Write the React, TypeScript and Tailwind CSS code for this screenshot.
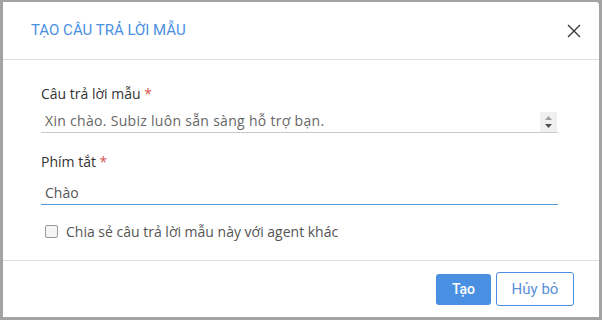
import React from "react";

export default function App() {
  return (
    <div className="w-[602px] h-[320px] bg-[#a3a3a3] pt-[2px] pl-[3px] pr-[3px] pb-[3px]">
      <div className="w-full h-full bg-white rounded-tr-[3px] flex flex-col" style={{ fontFamily: "'Open Sans', 'Noto Sans', sans-serif" }}>
        <div className="h-[58px] flex items-center justify-between pl-[28px] pr-[18px] border-b border-[#dedede]">
          <div className="text-[15px] text-[#4a90e2] tracking-[0px]" style={{ fontFamily: "Roboto, sans-serif" }}>TẠO CÂU TRẢ LỜI MẪU</div>
          <svg width="14" height="14" viewBox="0 0 14 14" className="mt-[1px]">
            <path d="M1 1 L13 13 M13 1 L1 13" stroke="#333" strokeWidth="1.3" />
          </svg>
        </div>
        <div className="flex-1 pl-[38px] pr-[41px] pt-[24px] border-b border-[#dedede]">
          <div className="text-[14px] text-[#333] leading-[20px]">Câu trả lời mẫu <span className="text-[#d9534f]">*</span></div>
          <div className="mt-[4px] h-[25px] border-b border-[#c8c8c8] flex items-center justify-between">
            <div className="pl-[4px] text-[14px] text-[#666] tracking-[0.3px]">Xin chào. Subiz luôn sẵn sàng hỗ trợ bạn.</div>
            <div className="w-[17px] h-[20px] bg-[#f0f0f0] flex flex-col items-center justify-center gap-[4px] mr-[1px] mb-[-4px]">
              <svg width="7" height="4" viewBox="0 0 7 4"><path d="M0 4 L3.5 0 L7 4 Z" fill="#a0a0a0" /></svg>
              <svg width="7" height="4" viewBox="0 0 7 4"><path d="M0 0 L3.5 4 L7 0 Z" fill="#505050" /></svg>
            </div>
          </div>
          <div className="mt-[19px] text-[14px] text-[#333] leading-[20px]">Phím tắt <span className="text-[#d9534f]">*</span></div>
          <div className="mt-[8px] h-[25px] border-b border-[#5b9bd5] flex items-center">
            <div className="pl-[4px] text-[14px] text-[#555]">Chào</div>
          </div>
          <div className="mt-[16px] flex items-center">
            <div className="ml-[4px] w-[13px] h-[13px] border border-[#999] rounded-[2px] bg-[#f5f5f5]" />
            <div className="ml-[8px] text-[14px] text-[#555]">Chia sẻ câu trả lời mẫu này với agent khác</div>
          </div>
        </div>
        <div className="h-[56px] flex items-center justify-end pr-[25px] gap-[5px]">
          <button className="w-[55px] h-[31px] rounded-[3px] bg-[#4a90e2] text-white text-[14px]" style={{ fontFamily: "Roboto, sans-serif", fontWeight: 500 }}>Tạo</button>
          <button className="w-[78px] h-[34px] rounded-[3px] border border-[#4a90e2] text-[#5a8fd6] text-[15px]" style={{ fontFamily: "Roboto, sans-serif" }}>Hủy bỏ</button>
        </div>
      </div>
    </div>
  );
}
